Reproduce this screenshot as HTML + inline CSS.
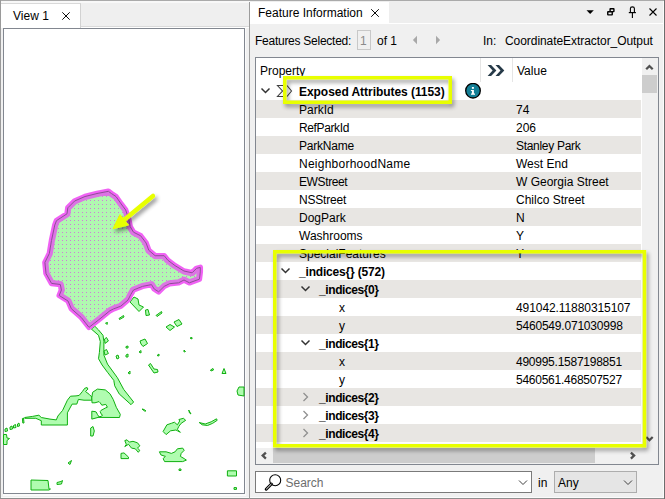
<!DOCTYPE html>
<html><head><meta charset="utf-8">
<style>
*{box-sizing:border-box;margin:0;padding:0}
html,body{width:665px;height:499px;overflow:hidden;background:#f0f0f0;font-family:"Liberation Sans",sans-serif;font-size:12px;color:#000}
.a{position:absolute}
.t{position:absolute;white-space:pre;line-height:14px;font-size:12px}
.row{position:absolute;left:256px;width:385px;height:18px}
.g{background:#e8e6e3}
.b{font-weight:bold;letter-spacing:-0.1px}
</style></head><body>
<!-- outer frame lines -->
<div class="a" style="left:0;top:1px;width:665px;height:1px;background:#f8f8f8"></div>
<div class="a" style="left:0;top:497px;width:665px;height:1px;background:#fbfbfb"></div>
<div class="a" style="left:0;top:0;width:665px;height:1px;background:#aaaaaa"></div>
<div class="a" style="left:0;top:0;width:1px;height:499px;background:#9a9a9a"></div>
<div class="a" style="left:0;top:498px;width:665px;height:1px;background:#8e8e8e"></div>

<!-- LEFT PANEL -->
<div class="a" style="left:1px;top:2px;width:248px;height:1px;background:#f8f8f8"></div>
<div class="a" style="left:81px;top:3px;width:168px;height:24px;background:#efefef;border-bottom:1px solid #dadada"></div>
<div class="a" style="left:1px;top:27px;width:248px;height:1px;background:#fff"></div>
<div class="a" style="left:1px;top:3px;width:80px;height:25px;background:#fff;border-top:1px solid #d9d9d9;border-right:1px solid #d2d2d2"></div>
<div class="t" style="left:13px;top:9px">View 1</div>
<svg class="a" style="left:61px;top:11px" width="10" height="10" viewBox="0 0 10 10"><path d="M1.3 1.3L8.7 8.7M8.7 1.3L1.3 8.7" stroke="#000" stroke-width="0.95"/></svg>
<div class="a" style="left:3px;top:28px;width:242px;height:466px;background:#fff;border:1px solid #828790"></div>
<div class="a" style="left:245px;top:27px;width:1px;height:469px;background:#fafafa"></div><div class="a" style="left:3px;top:494px;width:243px;height:2px;background:#fafafa"></div><div class="a" style="left:249px;top:2px;width:1px;height:497px;background:#9c9c9c"></div>

<!-- MAP -->
<svg class="a" style="left:0;top:0" width="250" height="499" viewBox="0 0 250 499">
<defs>
<pattern id="dots" width="4" height="4" patternUnits="userSpaceOnUse"><rect width="4" height="4" fill="#b0f8b0"/><rect x="2" y="0" width="1" height="1" fill="#cf7fd6"/></pattern>
<mask id="mIn"><path d="M108.4 191.3 L111.4 193.5 L116 196.5 L121.2 204 L125.7 210 L128.7 219 L130.2 226.6 L133.5 232.2 L140.7 235.8 L146.1 243 L148.8 250.3 L155.1 255.7 L164.2 255.7 L167.8 260.2 L175 265.6 L184 271 L192.1 272.8 L196.6 268.3 L200.3 267.4 L200.3 271.9 L199.4 279.2 L189.4 282.8 L184 280 L178.6 282.8 L169.6 283.7 L164.2 286.4 L158.7 291.8 L154.2 289 L151.5 284.6 L142.5 286.4 L133.5 290 L130.8 294.5 L128 300 L120.8 306.2 L113.6 308.9 L110 310.7 L98.9 319.7 L89 327.4 L81.3 317.5 L71.3 308.7 L68 301 L59.2 295.5 L61.4 290 L60.3 284.5 L51.5 283.4 L46 273.5 L44.9 262.4 L49.3 253.6 L51.5 240.4 L54.8 225 L56.5 220.6 L67 213.8 L67.8 207.8 L74.6 201 L85 196.5 L97 193.5 Z" fill="#fff"/></mask>
<mask id="mOut"><rect x="0" y="0" width="250" height="499" fill="#fff"/><path d="M108.4 191.3 L111.4 193.5 L116 196.5 L121.2 204 L125.7 210 L128.7 219 L130.2 226.6 L133.5 232.2 L140.7 235.8 L146.1 243 L148.8 250.3 L155.1 255.7 L164.2 255.7 L167.8 260.2 L175 265.6 L184 271 L192.1 272.8 L196.6 268.3 L200.3 267.4 L200.3 271.9 L199.4 279.2 L189.4 282.8 L184 280 L178.6 282.8 L169.6 283.7 L164.2 286.4 L158.7 291.8 L154.2 289 L151.5 284.6 L142.5 286.4 L133.5 290 L130.8 294.5 L128 300 L120.8 306.2 L113.6 308.9 L110 310.7 L98.9 319.7 L89 327.4 L81.3 317.5 L71.3 308.7 L68 301 L59.2 295.5 L61.4 290 L60.3 284.5 L51.5 283.4 L46 273.5 L44.9 262.4 L49.3 253.6 L51.5 240.4 L54.8 225 L56.5 220.6 L67 213.8 L67.8 207.8 L74.6 201 L85 196.5 L97 193.5 Z" fill="#000"/></mask>
<filter id="sh" x="-50%" y="-50%" width="200%" height="200%"><feGaussianBlur in="SourceAlpha" stdDeviation="2"/><feOffset dx="2" dy="3"/><feComponentTransfer><feFuncA type="linear" slope="0.45"/></feComponentTransfer><feMerge><feMergeNode/><feMergeNode in="SourceGraphic"/></feMerge></filter>
</defs>
<g fill="#b0fcb0" stroke="#10b010" stroke-width="1" stroke-linejoin="round">
<path d="M91.3 329 L98.5 335.3 L100.3 341.6 L99.4 352.4 L98.5 358.7 L102.1 365 L107.5 372.3 L113.8 380.4 L114.7 385.8 L119.2 393.9 L129.1 402.9 L131 404.7 L133.6 402 L123.7 389.4 L117.4 377.7 L107.5 364.1 L103.9 355.1 L103.9 341.6 L103 335.3 L98.5 329.9 L94.9 326.3 Z"/>
<path d="M104.5 339 L106.5 337.5 L108.4 341 L105 343.4 Z"/>
<path d="M104 351 L106.5 349.5 L108.4 353.5 L105 355 Z"/>
<path d="M130 302 L134 297 L138 299 L139 305 L143.5 307 L139 311.5 Z"/>
<path d="M145.5 310 L148 309.5 L149.5 315 L146 315.5Z"/>
<path d="M156 315.5 L161.5 311.5 L162 313 L157 316.5Z"/>
<path d="M119 318.5 L123.5 315.5 L124 317 L119.5 319.5Z"/>
<path d="M105.5 323 L107.5 322.5 L107 324.5Z"/>
<path d="M166 327 L170 324.5 L174.5 327 L170 330.5Z"/>
<path d="M174 322 L179 319.5 L182 324 L177 326.5Z"/>
<path d="M190 338 L192 337.5 L192 339Z"/>
<path d="M184 350 L185.5 351.5 L184 352Z"/>
<path d="M140 341 L145 339 L147.5 343.5 L143 346.5 L141 344Z"/>
<path d="M148.5 365 L150.5 363.5 L154 369 L157.5 369.5 L158 372 L154 373 Z"/>
<path d="M126 346.5 L128 346 L128 348 L126 348Z"/>
<path d="M116 356 L118 355 L119 358 L117 359Z"/>
<path d="M126 355 L128 354 L128 357 L126 357Z"/>
<path d="M139 352 L141 350.5 L141 353Z"/>
<path d="M157 355.5 L159 354 L159 356Z"/>
<path d="M128 373 L130 371 L130 374Z"/>
<path d="M210.5 370 L213 368.5 L213.5 370 L211 371Z"/>
<path d="M222 373.5 L224 368.5 L226 373.5Z"/>
<path d="M237 391 L239 387 L244 387 L244 396 L238 395Z"/>
<path d="M24.7 417.5 L32.6 416.4 L38.9 415.2 L41.3 417.5 L50 419.1 L56.3 419.9 L57.9 416 L62.6 410.4 L67.4 400.2 L70.5 396.2 L76 395.9 L79.2 395.4 L82.4 391.5 L84.7 388.3 L87.1 387.5 L87.9 389.1 L85.5 391.5 L89.5 394.6 L91.8 397 L91.8 400.2 L84 400.2 L78.4 399.4 L76.8 404.1 L72.1 404.1 L67.4 412.8 L67.4 425 L41.3 425 L41.3 420.7 L35.8 418.3 L24.7 418.3 Z"/>
<path d="M91.8 397.8 L92.6 392.3 L97.4 389.1 L105.3 389.9 L110 393.8 L113.2 399.4 L116.3 407.3 L120.3 414.4 L119.5 417.5 L98.2 417.4 L99 416.8 L101 416.4 L102.6 415.2 L101.4 414.4 L100.2 411.6 L101 410.4 L105.4 408 L107.4 407.2 L105.8 404.4 L101.8 405.2 L100.2 402.8 L99 401.6 L95 402.8 L92 402.8 Z"/>
<path d="M91.8 411.2 L95 411.6 L96.2 412 L97.4 414.4 L99 416.8 L98.2 417.4 L91.8 419.1 Z"/>
<path d="M90.7 428 L93 426.5 L94.3 431 L93 436 L90.7 436Z"/>
<path d="M5 429 L7 428 L7.5 431 L5 431.5Z"/>
<path d="M10 427 L12 426 L12.5 429 L10 429.5Z"/>
<path d="M13.5 425.5 L15.5 424.5 L16 427.5 L13.5 428Z"/>
<path d="M17.5 424 L19 423 L19.5 426 L17.5 426.5Z"/>
<path d="M22.4 418.5 L23.5 418 L24 423 L22.8 423Z"/>
<path d="M3.5 434.5 L6.5 434.5 L7 438 L9.5 438.5 L7 440.5 L7 444.5 L3.5 444.5Z"/>
<path d="M68 463 L71.5 460.5 L70 464.5Z"/>
<path d="M31 480 L48 480.5 L49 489 L50.5 489 L49 490 L31 490Z"/>
<path d="M57 482.5 L61 481.5 L62.5 480.5 L61.5 484 L57 484.5Z"/>
<path d="M142 409 L144 409.5 L146 411 L144.5 411Z"/>
<path d="M188.7 410 L191 414 L189.5 413Z"/>
<path d="M163.1 431.5 L166.9 424.8 L171.4 423.3 L174.4 422.2 L177.4 424.8 L179.7 421 L178.9 419.5 L183.4 418.3 L185.7 420.3 L181.2 423.3 L178.9 426.3 L177.4 429.3 L180.4 432.3 L177.4 430.8 L175.9 430 L170.6 430.8 L166.1 434.6 Z"/>
<path d="M199.2 422.5 L205.2 424 L211.2 421.8 L216.5 418.8 L217.2 420.3 L212.7 423.3 L207.5 425.5 L202.2 424.8 Z"/>
<path d="M124.8 440.6 L127 439.8 L129.3 442.1 L133 441.3 L137.5 442.8 L139.8 445.8 L137.5 448.1 L139.8 450.3 L138.3 452.3 L135.3 448.8 L131.5 448.1 L128.5 444.3 L124.8 446.6 L126.3 444.3 Z"/>
<path d="M121 453.4 L124 452.9 L128.5 457.1 L128.5 458.6 L121 458.6 Z"/>
<path d="M159.4 451.8 L166.1 451.8 L171.4 453.4 L175.1 451.8 L177.4 448.8 L182.7 448.1 L184.2 450.3 L181.2 453.4 L180.4 456.4 L184.2 458.6 L186.4 460.1 L182.7 461.6 L164.6 461.6 L163.1 458.6 L165.4 456.4 L160.9 454.9 Z"/>
<path d="M179 469 L181 469 L181 470.5 L179 470.5Z"/>
<path d="M227.4 470.8 L236.5 470.8 L236.5 476 L227.4 476Z"/>
<path d="M234 487.6 L236.5 487.6 L236.5 489.4 L234 489.4Z"/>
</g>
<path d="M108.4 191.3 L111.4 193.5 L116 196.5 L121.2 204 L125.7 210 L128.7 219 L130.2 226.6 L133.5 232.2 L140.7 235.8 L146.1 243 L148.8 250.3 L155.1 255.7 L164.2 255.7 L167.8 260.2 L175 265.6 L184 271 L192.1 272.8 L196.6 268.3 L200.3 267.4 L200.3 271.9 L199.4 279.2 L189.4 282.8 L184 280 L178.6 282.8 L169.6 283.7 L164.2 286.4 L158.7 291.8 L154.2 289 L151.5 284.6 L142.5 286.4 L133.5 290 L130.8 294.5 L128 300 L120.8 306.2 L113.6 308.9 L110 310.7 L98.9 319.7 L89 327.4 L81.3 317.5 L71.3 308.7 L68 301 L59.2 295.5 L61.4 290 L60.3 284.5 L51.5 283.4 L46 273.5 L44.9 262.4 L49.3 253.6 L51.5 240.4 L54.8 225 L56.5 220.6 L67 213.8 L67.8 207.8 L74.6 201 L85 196.5 L97 193.5 Z" fill="url(#dots)"/>
<path d="M108.4 191.3 L111.4 193.5 L116 196.5 L121.2 204 L125.7 210 L128.7 219 L130.2 226.6 L133.5 232.2 L140.7 235.8 L146.1 243 L148.8 250.3 L155.1 255.7 L164.2 255.7 L167.8 260.2 L175 265.6 L184 271 L192.1 272.8 L196.6 268.3 L200.3 267.4 L200.3 271.9 L199.4 279.2 L189.4 282.8 L184 280 L178.6 282.8 L169.6 283.7 L164.2 286.4 L158.7 291.8 L154.2 289 L151.5 284.6 L142.5 286.4 L133.5 290 L130.8 294.5 L128 300 L120.8 306.2 L113.6 308.9 L110 310.7 L98.9 319.7 L89 327.4 L81.3 317.5 L71.3 308.7 L68 301 L59.2 295.5 L61.4 290 L60.3 284.5 L51.5 283.4 L46 273.5 L44.9 262.4 L49.3 253.6 L51.5 240.4 L54.8 225 L56.5 220.6 L67 213.8 L67.8 207.8 L74.6 201 L85 196.5 L97 193.5 Z" fill="none" stroke="#dc74e4" stroke-width="7" stroke-linejoin="round" mask="url(#mIn)"/>
<path d="M108.4 191.3 L111.4 193.5 L116 196.5 L121.2 204 L125.7 210 L128.7 219 L130.2 226.6 L133.5 232.2 L140.7 235.8 L146.1 243 L148.8 250.3 L155.1 255.7 L164.2 255.7 L167.8 260.2 L175 265.6 L184 271 L192.1 272.8 L196.6 268.3 L200.3 267.4 L200.3 271.9 L199.4 279.2 L189.4 282.8 L184 280 L178.6 282.8 L169.6 283.7 L164.2 286.4 L158.7 291.8 L154.2 289 L151.5 284.6 L142.5 286.4 L133.5 290 L130.8 294.5 L128 300 L120.8 306.2 L113.6 308.9 L110 310.7 L98.9 319.7 L89 327.4 L81.3 317.5 L71.3 308.7 L68 301 L59.2 295.5 L61.4 290 L60.3 284.5 L51.5 283.4 L46 273.5 L44.9 262.4 L49.3 253.6 L51.5 240.4 L54.8 225 L56.5 220.6 L67 213.8 L67.8 207.8 L74.6 201 L85 196.5 L97 193.5 Z" fill="none" stroke="#f062f4" stroke-width="5.5" stroke-linejoin="round" mask="url(#mOut)"/>
<path d="M108.4 191.3 L111.4 193.5 L116 196.5 L121.2 204 L125.7 210 L128.7 219 L130.2 226.6 L133.5 232.2 L140.7 235.8 L146.1 243 L148.8 250.3 L155.1 255.7 L164.2 255.7 L167.8 260.2 L175 265.6 L184 271 L192.1 272.8 L196.6 268.3 L200.3 267.4 L200.3 271.9 L199.4 279.2 L189.4 282.8 L184 280 L178.6 282.8 L169.6 283.7 L164.2 286.4 L158.7 291.8 L154.2 289 L151.5 284.6 L142.5 286.4 L133.5 290 L130.8 294.5 L128 300 L120.8 306.2 L113.6 308.9 L110 310.7 L98.9 319.7 L89 327.4 L81.3 317.5 L71.3 308.7 L68 301 L59.2 295.5 L61.4 290 L60.3 284.5 L51.5 283.4 L46 273.5 L44.9 262.4 L49.3 253.6 L51.5 240.4 L54.8 225 L56.5 220.6 L67 213.8 L67.8 207.8 L74.6 201 L85 196.5 L97 193.5 Z" fill="none" stroke="#8c4a96" stroke-width="1" stroke-linejoin="round"/>
<g filter="url(#sh)">
<path d="M153 196 L124 220" stroke="#e8ff00" stroke-width="4.5" stroke-linecap="round"/>
<path d="M113 228.6 L120 214.6 L128.5 225 Z" fill="#e8ff00" stroke="#e8ff00" stroke-width="1" stroke-linejoin="round"/>
</g>
</svg>

<!-- RIGHT PANEL -->
<div class="a" style="left:250px;top:1px;width:414px;height:22px;background:#eeeeee"></div>
<div class="a" style="left:250px;top:23px;width:414px;height:1px;background:#fff"></div>
<div class="a" style="left:250px;top:2px;width:139px;height:21px;background:#fff"></div>
<div class="a" style="left:663px;top:1px;width:1px;height:497px;background:#fbfbfb"></div><div class="a" style="left:664px;top:0;width:1px;height:499px;background:#6d6d6d"></div>
<div class="t" style="left:258px;top:6px">Feature Information</div>
<svg class="a" style="left:370px;top:8px" width="10" height="10" viewBox="0 0 10 10"><path d="M1.2 1.2L8.8 8.8M8.8 1.2L1.2 8.8" stroke="#000" stroke-width="0.95"/></svg>
<!-- top right icons -->
<svg class="a" style="left:580px;top:0" width="85" height="24" viewBox="0 0 85 24">
<path d="M6.5 10.2 L13.8 10.2 L10.15 14Z" fill="#000"/>
<rect x="30.1" y="8.8" width="3.8" height="2.8" rx="0.3" fill="none" stroke="#000" stroke-width="1.4"/>
<rect x="27.75" y="11.75" width="4.5" height="3.1" rx="0.3" fill="#eee" stroke="#000" stroke-width="1.4"/>
<path d="M50.4 12.5 V8.6 Q50.4 6.9 52.4 6.9 Q54.4 6.9 54.4 8.6 V12.5" fill="none" stroke="#000" stroke-width="1.1"/>
<path d="M48.8 12.6 H55.9" stroke="#000" stroke-width="1.2"/>
<path d="M52.4 12.6 V17.9" stroke="#000" stroke-width="1.1"/>
<path d="M69.5 8.5L76.5 15.5M76.5 8.5L69.5 15.5" stroke="#000" stroke-width="1.1"/>
</svg>

<div class="t" style="left:255px;top:34px;letter-spacing:-0.26px">Features Selected:</div>
<div class="a" style="left:357px;top:30px;width:14px;height:20px;border:1px solid #c8c8c8;background:#f0f0f0"></div>
<div class="t" style="left:360px;top:34px;color:#8a8a8a">1</div>
<div class="t" style="left:377px;top:34px">of 1</div>
<svg class="a" style="left:410px;top:34px" width="34" height="12" viewBox="0 0 34 12"><path d="M7 1.8 L2.9 6 L7 10.2Z" fill="#a8a8a8"/><path d="M26 1.8 L30.1 6 L26 10.2Z" fill="#a8a8a8"/></svg>
<div class="t" style="left:483px;top:34px">In:</div>
<div class="t" style="left:505px;top:34px;letter-spacing:-0.06px">CoordinateExtractor_Output</div>

<!-- TABLE -->
<div class="a" style="left:255px;top:57px;width:404px;height:408px;background:#fff;border:1px solid #828790"></div>
<div class="a" style="left:480px;top:58px;width:1px;height:24px;background:#e5e5e5"></div>
<div class="a" style="left:512px;top:58px;width:1px;height:24px;background:#e5e5e5"></div>
<div class="t" style="left:260px;top:64px">Property</div>
<svg class="a" style="left:486px;top:63px" width="20" height="16" viewBox="0 0 20 16"><path d="M1.6 1.9 L5.1 1.9 L10.4 7.5 L5.1 13.1 L1.6 13.1 L6.6 7.5Z M9.5 1.9 L13 1.9 L18.3 7.5 L13 13.1 L9.5 13.1 L14.5 7.5Z" fill="#263a48"/></svg>
<div class="t" style="left:517px;top:64px">Value</div>

<div class="row g" style="top:100px"></div>
<div class="row g" style="top:136px"></div>
<div class="row g" style="top:172px"></div>
<div class="row g" style="top:208px"></div>
<div class="row g" style="top:244px"></div>
<div class="row g" style="top:280px"></div>
<div class="row g" style="top:316px"></div>
<div class="row g" style="top:352px"></div>
<div class="row g" style="top:388px"></div>
<div class="row g" style="top:424px"></div>

<!-- row 0 exposed -->
<svg class="a" style="left:258px;top:84px" width="36" height="14" viewBox="0 0 36 14">
<path d="M3.5 4.5 L7.5 8.5 L11.5 4.5" fill="none" stroke="#333" stroke-width="1.5"/>
<path d="M27.5 1.5 L19.5 1.5 L24.5 7 L19.5 12.5 L27.5 12.5" fill="none" stroke="#404040" stroke-width="1.1"/>
<path d="M29 1.5 L33.5 7 L29 12.5" fill="none" stroke="#404040" stroke-width="1.1"/>
</svg>
<div class="t b" style="left:299px;top:85px;letter-spacing:-0.05px">Exposed Attributes (1153)</div>
<svg class="a" style="left:464px;top:83px" width="18" height="18" viewBox="0 0 18 18"><circle cx="9" cy="7.7" r="7.3" fill="#137f96" stroke="#000" stroke-width="1.3"/><rect x="7.9" y="4" width="2" height="1.8" fill="#fff"/><path d="M6.9 6.9 H9.9 V10.6 H11 V11.8 H7 V10.6 H7.9 V8 H6.9Z" fill="#fff"/></svg>

<div class="t" style="left:299px;top:103px">ParkId</div><div class="t" style="left:516px;top:103px">74</div>
<div class="t" style="left:299px;top:121px;letter-spacing:-0.38px">RefParkId</div><div class="t" style="left:516px;top:121px">206</div>
<div class="t" style="left:299px;top:139px;letter-spacing:-0.2px">ParkName</div><div class="t" style="left:516px;top:139px;letter-spacing:-0.3px">Stanley Park</div>
<div class="t" style="left:299px;top:157px;letter-spacing:0.25px">NeighborhoodName</div><div class="t" style="left:516px;top:157px">West End</div>
<div class="t" style="left:299px;top:175px;letter-spacing:-0.38px">EWStreet</div><div class="t" style="left:516px;top:175px">W Georgia Street</div>
<div class="t" style="left:299px;top:193px;letter-spacing:-0.19px">NSStreet</div><div class="t" style="left:516px;top:193px">Chilco Street</div>
<div class="t" style="left:299px;top:211px">DogPark</div><div class="t" style="left:516px;top:211px">N</div>
<div class="t" style="left:299px;top:229px">Washrooms</div><div class="t" style="left:516px;top:229px">Y</div>
<div class="t" style="left:299px;top:247px">SpecialFeatures</div><div class="t" style="left:516px;top:247px">Y</div>

<svg class="a" style="left:256px;top:262px" width="60" height="180" viewBox="0 0 60 180">
<g fill="none" stroke="#333" stroke-width="1.5">
<path d="M25.5 6.5 L29.5 10.5 L33.5 6.5"/>
<path d="M45.5 24.5 L49.5 28.5 L53.5 24.5"/>
<path d="M45.5 78.5 L49.5 82.5 L53.5 78.5"/>
</g>
<g fill="none" stroke="#909090" stroke-width="1.3">
<path d="M47.5 131 L51.5 135 L47.5 139"/>
<path d="M47.5 149 L51.5 153 L47.5 157"/>
<path d="M47.5 167 L51.5 171 L47.5 175"/>
</g>
</svg>
<div class="t b" style="left:299px;top:265px;letter-spacing:-0.18px">_indices{} (572)</div>
<div class="t b" style="left:319px;top:283px;letter-spacing:-0.4px">_indices{0}</div>
<div class="t" style="left:339px;top:301px">x</div><div class="t" style="left:516px;top:301px;letter-spacing:-0.08px">491042.11880315107</div>
<div class="t" style="left:339px;top:319px">y</div><div class="t" style="left:516px;top:319px;letter-spacing:-0.2px">5460549.071030998</div>
<div class="t b" style="left:319px;top:337px;letter-spacing:-0.4px">_indices{1}</div>
<div class="t" style="left:339px;top:355px">x</div><div class="t" style="left:516px;top:355px;letter-spacing:-0.25px">490995.1587198851</div>
<div class="t" style="left:339px;top:373px">y</div><div class="t" style="left:516px;top:373px;letter-spacing:-0.25px">5460561.468507527</div>
<div class="t b" style="left:319px;top:391px;letter-spacing:-0.4px">_indices{2}</div>
<div class="t b" style="left:319px;top:409px;letter-spacing:-0.4px">_indices{3}</div>
<div class="t b" style="left:319px;top:427px;letter-spacing:-0.4px">_indices{4}</div>

<!-- vertical scrollbar -->
<div class="a" style="left:642px;top:58px;width:16px;height:390px;background:#f0f0f0"></div>
<div class="a" style="left:642px;top:75px;width:15px;height:18px;background:#cdcdcd"></div>
<svg class="a" style="left:642px;top:60px" width="16" height="388" viewBox="0 0 16 388"><path d="M4.2 9.2 L7.45 6 L10.7 9.2" fill="none" stroke="#505050" stroke-width="2.3"/><path d="M4.2 377 L7.45 380.2 L10.7 377" fill="none" stroke="#505050" stroke-width="2.3"/></svg>
<!-- horizontal scrollbar -->
<div class="a" style="left:256px;top:448px;width:402px;height:16px;background:#f0f0f0"></div>
<div class="a" style="left:273px;top:448px;width:322px;height:15px;background:#cdcdcd"></div>
<svg class="a" style="left:256px;top:448px" width="386" height="16" viewBox="0 0 386 16"><path d="M9.9 4.6 L6.7 7.6 L9.9 10.6" fill="none" stroke="#505050" stroke-width="2.3"/><path d="M374.9 4.6 L378.1 7.6 L374.9 10.6" fill="none" stroke="#505050" stroke-width="2.3"/></svg>

<!-- yellow boxes -->
<svg class="a" style="left:250px;top:60px" width="415" height="400" viewBox="250 60 415 400">
<defs><filter id="sh2" x="-10%" y="-10%" width="120%" height="130%"><feGaussianBlur in="SourceAlpha" stdDeviation="2.2"/><feOffset dx="2" dy="3"/><feComponentTransfer><feFuncA type="linear" slope="0.4"/></feComponentTransfer><feMerge><feMergeNode/><feMergeNode in="SourceGraphic"/></feMerge></filter></defs>
<g filter="url(#sh2)" fill="none" stroke="#e8ff00" stroke-width="3.5">
<rect x="284.75" y="77.75" width="165.5" height="24.5"/>
<rect x="274.75" y="251.75" width="369.7" height="194"/>
</g>
</svg>

<!-- search bar -->
<div class="a" style="left:255px;top:471px;width:277px;height:22px;background:#fff;border:1px solid #7a7a7a"></div>
<svg class="a" style="left:263px;top:472px" width="20" height="20" viewBox="0 0 20 20"><circle cx="12.2" cy="8.2" r="5.5" fill="none" stroke="#000" stroke-width="1.1"/><path d="M8.4 12 L3.2 17.2" stroke="#000" stroke-width="3" stroke-linecap="round"/><path d="M8.4 12 L3.2 17.2" stroke="#fff" stroke-width="1"/></svg>
<div class="t" style="left:285.5px;top:476px;color:#6d6d6d">Search</div>
<svg class="a" style="left:514px;top:474px" width="16" height="16" viewBox="0 0 16 16"><path d="M5 6.5 L9 10.5 L13 6.5" fill="none" stroke="#404040" stroke-width="1"/></svg>
<div class="t" style="left:538px;top:476px">in</div>
<div class="a" style="left:554px;top:471px;width:83px;height:22px;background:#e5e5e5;border:1px solid #adadad"></div>
<div class="t" style="left:558px;top:476px">Any</div>
<svg class="a" style="left:619px;top:474px" width="16" height="16" viewBox="0 0 16 16"><path d="M5 6.5 L9 10.5 L13 6.5" fill="none" stroke="#404040" stroke-width="1"/></svg>
</body></html>
